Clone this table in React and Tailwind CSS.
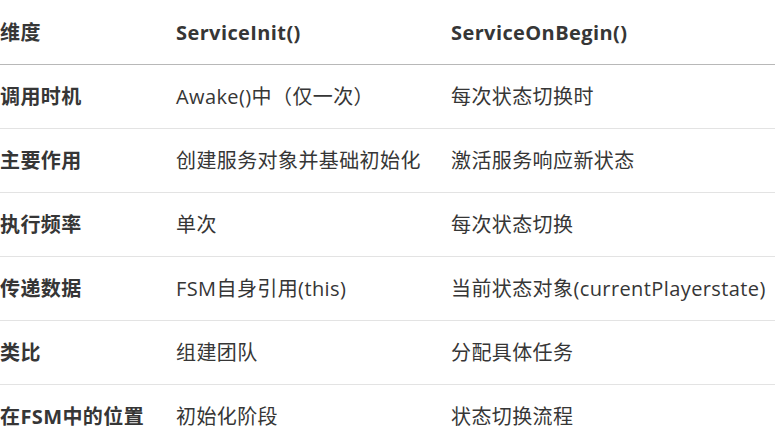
import React from 'react';

const rows = [
    ['调用时机', 'Awake()中（仅一次）', '每次状态切换时'],
    ['主要作用', '创建服务对象并基础初始化', '激活服务响应新状态'],
    ['执行频率', '单次', '每次状态切换'],
    ['传递数据', 'FSM自身引用(this)', '当前状态对象(currentPlayerstate)'],
    ['类比', '组建团队', '分配具体任务'],
    ['在FSM中的位置', '初始化阶段', '状态切换流程'],
];

const App = () => {
    return (
        <div
            className="w-[775px] h-[437px] overflow-hidden bg-white text-[20px] tracking-[0.4px] text-[#363636]"
            style={{ fontFamily: '"Open Sans", "Noto Sans CJK SC", sans-serif' }}
        >
            {/* Header */}
            <div className="grid grid-cols-[176px_275px_1fr] h-[65px] pt-[2px] items-center border-b border-[#b8b8b8] font-bold">
                <div>维度</div>
                <div>ServiceInit()</div>
                <div>ServiceOnBegin()</div>
            </div>

            {/* Body */}
            {rows.map((row, i) => (
                <div
                    key={i}
                    className="grid grid-cols-[176px_275px_1fr] h-[64px] items-center border-b border-[#e3e3e3]"
                >
                    <div className="font-bold whitespace-nowrap">{row[0]}</div>
                    <div className="whitespace-nowrap">{row[1]}</div>
                    <div className="whitespace-nowrap">{row[2]}</div>
                </div>
            ))}
        </div>
    );
};

export default App;
